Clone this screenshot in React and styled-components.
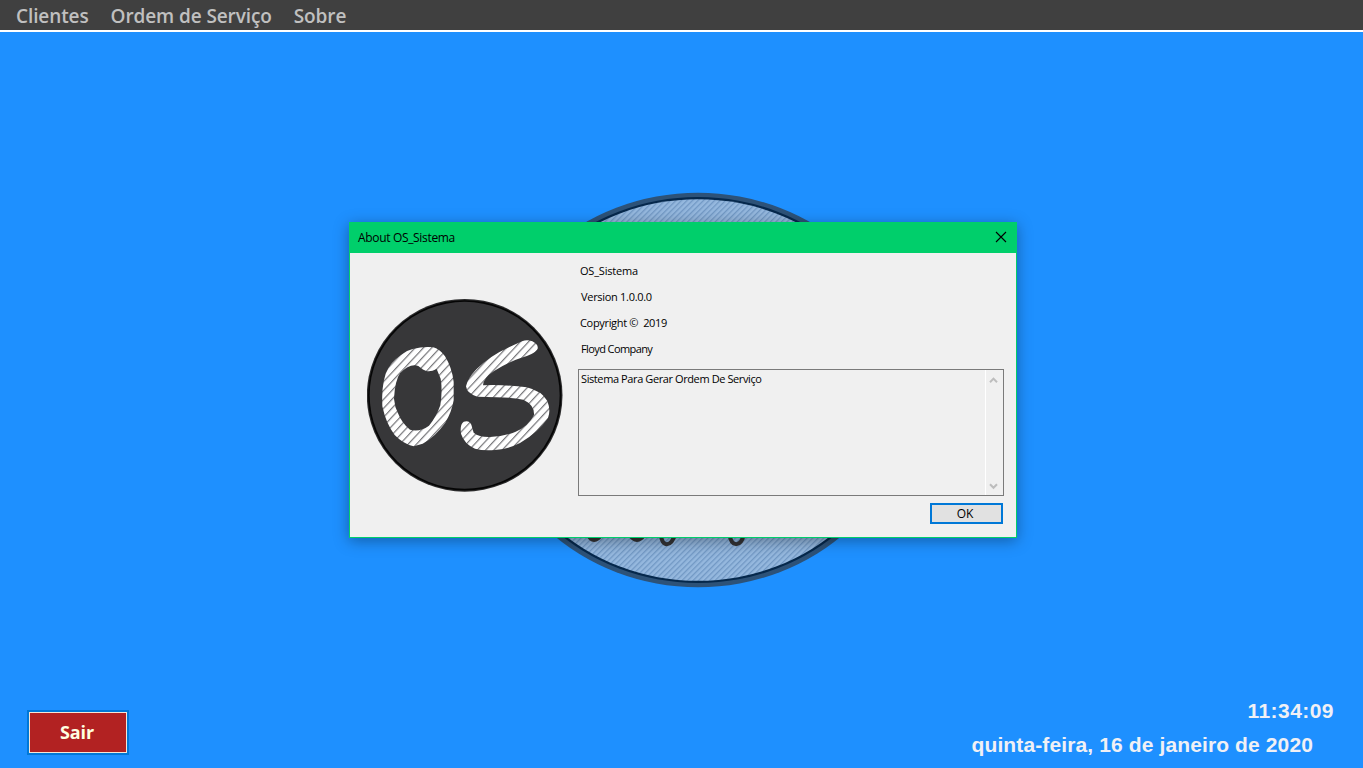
import React from 'react';
import styled, { createGlobalStyle } from 'styled-components';

const GlobalStyle = createGlobalStyle`
  * { box-sizing: border-box; }
  body { margin: 0; overflow: hidden; }
`;

const Desktop = styled.div`
  position: relative;
  display: flex;
  flex-direction: column;
  width: 100%;
  height: 100vh;
  background: #1e90ff;
  overflow: hidden;
`;

const MenuBar = styled.nav`
  display: flex;
  gap: 22px;
  height: 32px;
  padding-left: 16px;
  background: #404040;
  border-bottom: 2px solid #fff;
`;

const MenuItem = styled.span`
  font: 600 19px/32px "Open Sans", sans-serif;
  letter-spacing: -0.1px;
  color: #c0c0c0;
  white-space: nowrap;
`;

const Footer = styled.footer`
  display: flex;
  justify-content: space-between;
  align-items: flex-end;
  margin-top: auto;
  padding: 0 0 6px 29px;
`;

const ExitButton = styled.button`
  width: 98px;
  height: 41px;
  margin-bottom: 9px;
  padding: 0 2px 2px 0;
  background: #b22222;
  border: 1px solid #f5e6d8;
  outline: 2px solid #0078d7;
  color: #ffffe0;
  font: 700 18px/36px "Open Sans", sans-serif;
  letter-spacing: -0.1px;
`;

const Clock = styled.div`
  display: flex;
  flex-direction: column;
  align-items: flex-end;
  color: #f0f0f5;
  font: bold 21px/34px "Liberation Sans", Arial, sans-serif;
  white-space: nowrap;
`;

const Time = styled.time`
  margin-right: 29px;
  letter-spacing: 0.45px;
`;

const DateText = styled.time`
  margin-right: 50px;
  letter-spacing: 0.12px;
`;

const BackLogo = styled.svg`
  position: absolute;
  left: 485px;
  top: 192px;
`;

const Dialog = styled.section`
  position: absolute;
  left: 349px;
  top: 222px;
  width: 668px;
  height: 316px;
  display: flex;
  flex-direction: column;
  background: #f0f0f0;
  border: 1px solid #00cf6b;
  box-shadow: 0 3px 14px rgba(0, 0, 0, 0.34);
`;

const TitleBar = styled.header`
  display: flex;
  justify-content: space-between;
  align-items: center;
  height: 30px;
  padding: 0 9px 0 8px;
  background: #00cf6b;
`;

const Title = styled.span`
  font: 12px/30px "Open Sans", sans-serif;
  letter-spacing: -0.33px;
  color: #000;
`;

const CloseIcon = styled.svg`
  margin-bottom: 2px;
`;

const Content = styled.div`
  display: flex;
  flex: 1;
  padding: 5px 12px 12px 17px;
`;

const Logo = styled.svg`
  margin-top: 41px;
  flex: none;
`;

const Details = styled.div`
  display: flex;
  flex-direction: column;
  width: 426px;
  margin-left: 15px;
`;

const Line = styled.div`
  height: 26px;
  padding-left: ${(p) => p.$indent || 2}px;
  font: 11px/26px "Open Sans", sans-serif;
  letter-spacing: ${(p) => p.$spacing || 0}px;
  color: #000;
  white-space: pre;
`;

const Description = styled.div`
  display: flex;
  justify-content: space-between;
  height: 127px;
  margin-top: 7px;
  border: 1px solid #7a7a7a;
`;

const DescriptionText = styled.p`
  margin: 0;
  padding-left: 2px;
  font: 11px/17px "Open Sans", sans-serif;
  letter-spacing: -0.4px;
  color: #000;
`;

const ScrollTrack = styled.div`
  display: flex;
  flex-direction: column;
  justify-content: space-between;
  width: 18px;
  padding: 7px 5px 5px 3px;
  border-left: 1px solid #fff;
`;

const OkButton = styled.button`
  align-self: flex-end;
  width: 73px;
  height: 21px;
  margin: 7px 1px 0 0;
  padding: 0 3px 0 0;
  background: #e1e1e1;
  border: 2px solid #0078d7;
  font: 12px/17px "Open Sans", sans-serif;
  color: #000;
`;

function Chevron({ down }) {
  return (
    <svg width="9" height="7" viewBox="0 0 9 7">
      <path d={down ? 'M1 1.2 4.5 4.8 8 1.2' : 'M1 5.2 4.5 1.6 8 5.2'} fill="none" stroke="#bdbdbd" strokeWidth="2" />
    </svg>
  );
}

function Backdrop() {
  return (
    <BackLogo width="428" height="396" viewBox="0 0 428 396">
      <defs>
        <pattern id="fine" width="3.9" height="3.9" patternUnits="userSpaceOnUse" patternTransform="rotate(45)">
          <rect width="3.9" height="3.9" fill="#95b8de" />
          <rect width="1.3" height="3.9" fill="#7198c4" />
        </pattern>
      </defs>
      <ellipse cx="213" cy="198" rx="213.5" ry="197.2" fill="#2d5278" />
      <ellipse cx="213" cy="198" rx="208" ry="193" fill="#05284c" />
      <ellipse cx="213" cy="198" rx="205.5" ry="190.8" fill="url(#fine)" />
      <g fill="none" stroke="#333335" strokeWidth="4">
        <path d="M103 343C106 349.5 112 349.5 116 343" />
        <path d="M145 343C149 349.5 155 349.5 159 343" />
        <path d="M176 342C176 355.5 187 355.5 190 342" />
        <path d="M244.5 342C246 355.5 256 355.5 259 342" />
      </g>
    </BackLogo>
  );
}

function OsLogo() {
  return (
    <Logo width="196" height="194" viewBox="21 26 588 582">
      <defs>
        <pattern id="hatch" width="18.2" height="18.2" patternUnits="userSpaceOnUse" patternTransform="rotate(43)">
          <rect width="18.2" height="18.2" fill="#fff" />
          <rect width="3.6" height="18.2" fill="#77777a" />
        </pattern>
      </defs>
      <ellipse cx="314" cy="315" rx="293.5" ry="289" fill="#2b2b2c" />
      <ellipse cx="314" cy="315" rx="290" ry="285.5" fill="#050505" />
      <ellipse cx="314" cy="315" rx="285" ry="280.5" fill="#373739" />
      <path
        fill="url(#hatch)"
        fillRule="evenodd"
        d="M158 176 Q190 168 220 171 Q240 177 255 198 Q276 232 281 275 L281 330 Q275 365 256 397 Q225 440 188 460 L161 468 Q130 461 104 434 Q78 400 67 348 Q64 290 77 250 Q90 215 124 193 Q140 180 158 176Z M166 225 Q145 223 120 249 Q105 270 102 325 Q104 350 114 369 Q126 400 150 418 Q180 426 207 406 Q228 382 241 345 Q248 300 242 265 L230 236 Q210 246 197 241 Q188 238 182 232 Q176 226 166 225Z"
      />
      <path
        fill="url(#hatch)"
        d="M486 153 Q501 147 517 153 Q538 164 532 178 Q524 190 480 204 Q440 217 401 243 Q370 264 369 285 L400 284 Q455 285 500 291 Q545 302 562 332 Q573 360 564 383 Q535 426 480 458 Q440 478 405 479 Q370 482 345 475 Q312 460 303 430 Q299 403 311 394 Q328 389 334 403 L341 427 Q358 441 390 440 Q435 438 467 424 Q505 408 522 374 Q524 344 490 328 Q455 321 410 321 L352 319 Q320 309 318 288 Q322 265 350 236 Q390 196 450 169Z"
      />
    </Logo>
  );
}

export default function App() {
  return (
    <Desktop>
      <GlobalStyle />
      <MenuBar>
        <MenuItem>Clientes</MenuItem>
        <MenuItem>Ordem de Serviço</MenuItem>
        <MenuItem>Sobre</MenuItem>
      </MenuBar>
      <Backdrop />
      <Dialog>
        <TitleBar>
          <Title>About OS_Sistema</Title>
          <CloseIcon width="12" height="12" viewBox="0 0 12 12">
            <path d="M1 1 11 11M11 1 1 11" stroke="#000" strokeWidth="1.1" />
          </CloseIcon>
        </TitleBar>
        <Content>
          <OsLogo />
          <Details>
            <Line $spacing={-0.2}>OS_Sistema</Line>
            <Line $spacing={-0.3} $indent={3}>Version 1.0.0.0</Line>
            <Line $spacing={-0.33}>Copyright ©  2019</Line>
            <Line $spacing={-0.6} $indent={3}>Floyd Company</Line>
            <Description>
              <DescriptionText>Sistema Para Gerar Ordem De Serviço</DescriptionText>
              <ScrollTrack>
                <Chevron />
                <Chevron down />
              </ScrollTrack>
            </Description>
            <OkButton>OK</OkButton>
          </Details>
        </Content>
      </Dialog>
      <Footer>
        <ExitButton>Sair</ExitButton>
        <Clock>
          <Time>11:34:09</Time>
          <DateText>quinta-feira, 16 de janeiro de 2020</DateText>
        </Clock>
      </Footer>
    </Desktop>
  );
}
